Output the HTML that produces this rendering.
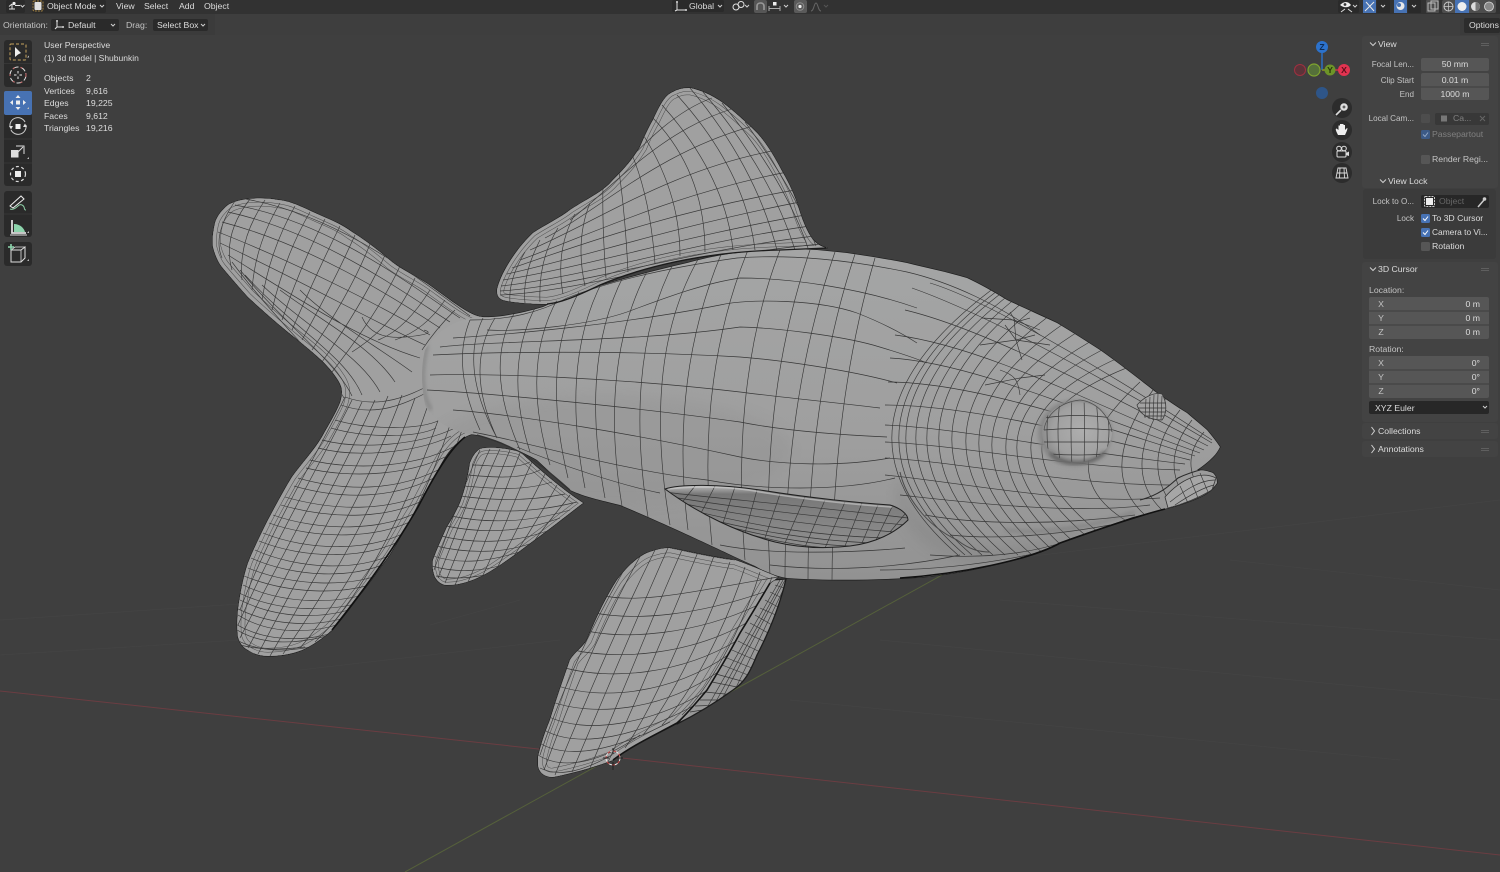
<!DOCTYPE html>
<html lang="en"><head><meta charset="utf-8"><title>Blender viewport</title>
<style>
html,body{margin:0;padding:0;background:#3f3f3f;overflow:hidden}
svg{display:block}
text{font-family:"Liberation Sans",sans-serif;font-size:8.7px;fill:#dcdcdc}
.r{text-anchor:end}.c{text-anchor:middle}
.d{fill:#8f8f8f}.l{fill:#c4c4c4}.dim{fill:#777}
.s{font-size:8.1px}
.w{fill:none;stroke:#363636;stroke-width:.65}
.o{stroke:#1d1d1d;stroke-width:1.3;stroke-linejoin:round}
.ic{fill:none;stroke:#e2e2e2;stroke-width:1}
.chev{fill:none;stroke:#d0d0d0;stroke-width:1}
.grip{fill:#5f5f5f}
</style></head><body>
<svg width="1500" height="872" viewBox="0 0 1500 872" xmlns="http://www.w3.org/2000/svg">
<defs>
<linearGradient id="bg" x1="0" y1="0" x2="0" y2="1"><stop offset="0" stop-color="#a4a5a5"/><stop offset=".55" stop-color="#9f9f9f"/><stop offset="1" stop-color="#929292"/></linearGradient>
<linearGradient id="pf" x1="0" y1="0" x2="0" y2="1"><stop offset="0" stop-color="#bcbcbc"/><stop offset=".14" stop-color="#777"/><stop offset=".6" stop-color="#858585"/><stop offset="1" stop-color="#8e8e8e"/></linearGradient>
<radialGradient id="eg" cx=".58" cy=".48" r=".6"><stop offset="0" stop-color="#aeaeae"/><stop offset=".72" stop-color="#a0a0a0"/><stop offset="1" stop-color="#8a8a8a"/></radialGradient>
<filter id="bl" x="-30%" y="-30%" width="160%" height="160%"><feGaussianBlur stdDeviation="6"/></filter>
<filter id="bl2" x="-30%" y="-30%" width="160%" height="160%"><feGaussianBlur stdDeviation="2"/></filter>
<clipPath id="cT"><path id="pT" d="M482,317 C470,316 450,300 432,287 C420,278 405,272 392,262 C378,250 365,240 352,232 C340,223 328,219 315,213 C300,206 290,201 278,200 C268,198 258,198 248,199 C240,200 233,202 228,205 C222,210 217,216 215,223 C213,232 212,240 213,247 C215,255 218,262 222,267 C232,279 240,288 248,297 C260,308 270,317 282,327 C295,338 306,346 318,357 C326,364 333,372 338,380 C341,385 342,388 342,392 C342,396 341,400 340,403 C335,415 328,426 322,437 C313,452 302,463 292,477 C284,490 276,505 268,520 C261,534 254,548 248,563 C243,578 240,595 238,610 C237,620 237,630 238,637 C240,644 244,648 248,650 C254,654 260,656 268,656 C280,656 292,654 302,650 C313,645 323,638 332,630 C341,620 350,608 358,597 C368,585 378,570 388,557 C398,542 408,522 418,507 C427,490 436,472 445,457 C451,448 458,441 465,437 C470,434 476,433 482,433 L520,380Z"/></clipPath>
<clipPath id="cB"><path id="pB" d="M425,350 C440,325 465,317 482,317 C495,318 520,314 543,307 C552,303 560,299 570,295 C586,290 603,285 620,280 C642,274 665,268 687,263 C705,258 720,255 737,253 C760,250 790,248 817,250 C827,251 838,252 847,253 C867,256 887,259 907,263 C927,268 947,272 967,278 C980,284 994,292 1007,300 C1024,308 1040,315 1057,323 C1072,332 1086,341 1100,350 C1120,364 1140,380 1157,393 C1167,400 1177,407 1187,413 C1194,419 1200,424 1207,430 C1212,436 1216,441 1220,447 C1218,451 1216,454 1213,457 C1208,462 1203,466 1197,470 C1203,470 1208,471 1213,473 C1216,476 1217,479 1217,483 C1213,489 1207,494 1200,497 C1187,503 1173,507 1160,510 C1151,512 1142,515 1133,517 C1110,525 1085,534 1060,543 C1040,552 1020,558 1000,563 C975,570 950,574 923,577 C880,580 830,581 787,578 C775,576 765,572 755,566 C730,555 680,530 620,505 C600,500 585,497 570,490 C558,480 548,470 537,460 C528,455 520,451 510,447 C498,441 488,438 477,435 C458,433 435,425 425,405 C421,385 421,365 425,350Z"/></clipPath>
<clipPath id="cD"><path id="pD" d="M497,290 C500,275 515,250 533,233 C545,225 560,218 570,210 C590,197 603,192 613,180 C625,168 632,160 640,147 C645,135 650,125 653,120 C660,105 665,95 673,92 C680,88 686,88 690,88 C700,90 712,95 723,103 C735,112 748,124 757,133 C768,145 776,160 783,173 C790,185 794,195 797,203 C802,220 807,232 813,240 C818,245 822,247 827,248 L780,250 C700,252 640,268 600,285 C575,297 560,303 547,304 C530,304 510,302 503,300 C498,298 497,295 497,290Z"/></clipPath>
<clipPath id="cA"><path id="pA" d="M480,449 C475,452 472,458 470,463 C468,477 465,490 460,503 C456,512 452,519 447,527 C442,538 437,549 433,560 C432,566 433,572 435,577 C438,582 442,585 447,585 C458,585 468,582 477,578 C491,572 504,562 517,553 C530,543 544,533 557,523 C566,516 575,509 583,503 C560,488 540,470 520,452 C510,449 490,446 480,449Z"/></clipPath>
<clipPath id="cP"><path id="pP" d="M538,757 C542,740 546,730 550,720 C556,700 563,680 570,660 C575,652 582,648 587,640 C596,618 606,597 617,580 C626,568 636,558 647,553 C655,550 662,548 670,548 C690,552 715,558 735,560 C750,565 765,572 778,577 C775,580 772,581 770,583 C760,600 750,617 740,633 C730,652 718,672 707,690 C697,702 687,714 677,723 C655,735 633,745 613,760 C595,767 573,773 553,777 C545,777 539,773 538,765Z"/></clipPath>
<clipPath id="cQ"><path id="pQ" d="M772,580 L786,579 C780,605 770,630 757,655 C750,672 745,682 733,690 C715,703 695,715 677,724 C695,705 720,665 740,633 C750,615 760,595 772,580Z"/></clipPath>
<clipPath id="cF"><path id="pF" d="M665,489 C680,484 720,484 760,490 C810,498 860,503 890,505 C900,508 908,514 908,520 C895,533 875,543 850,546 C825,549 800,548 775,542 C740,533 700,515 665,489Z"/></clipPath>
<clipPath id="cE"><ellipse id="pE" cx="1077" cy="432" rx="35" ry="30"/></clipPath>
<path id="w1" class="w" d="M470,316C420,280 340,215 245,199M460,318C410,285 330,222 235,205M450,322C400,290 320,232 228,212M440,328C390,295 310,245 222,222M430,335C380,305 290,260 218,232M425,345C370,320 300,280 220,243M420,358C360,340 300,300 228,255M412,372C375,345 330,320 300,290M395,382C370,345 320,320 280,290M380,392C360,355 310,330 262,285M362,395C345,355 295,330 245,275M352,396C335,360 285,325 240,270M344,398C322,360 275,320 232,262"/>
<path id="w2" class="w" d="M345,397C320,450 270,530 240,610M352,400C325,455 275,540 238,625M362,402C335,460 285,550 240,638M375,400C345,465 295,560 248,648M388,396C358,470 305,565 258,654M402,395C372,478 320,570 270,656M415,398C385,485 335,580 283,654M428,405C400,490 350,590 300,648M440,415C412,495 365,595 315,642M450,425C425,500 380,590 330,632M462,430C438,500 395,585 345,620M472,433C450,495 410,570 365,600"/>
<path id="w3" class="w" d="M345,397C380,410 410,395 430,385M335,420C370,430 420,430 440,420M322,440C360,450 420,445 455,428M310,460C350,470 420,470 465,440M298,478C340,490 400,495 452,462M285,497C330,510 395,515 440,485M273,515C315,530 385,535 430,505M263,533C305,550 375,555 418,525M255,550C295,568 360,575 405,548M248,568C290,585 350,590 392,570M243,585C285,605 340,605 378,590M240,600C280,620 330,620 364,604M238,615C270,635 315,635 350,620M237,630C262,645 295,645 330,635M240,645C260,650 280,650 305,647"/>
<path id="w4" class="w" d="M480,450C468,475 450,525 434,570M490,449C476,477 458,530 438,578M500,449C485,480 465,535 445,583M510,450C495,485 475,540 455,585M520,453C505,490 485,545 468,582M532,462C515,497 498,545 482,577M545,474C528,507 512,540 495,572M557,485C542,512 528,535 510,562M570,495C555,515 545,525 527,551"/>
<path id="w5" class="w" d="M472,465C490,465 515,470 530,462M468,475C490,477 520,480 540,470M464,486C488,488 522,492 552,482M460,496C488,500 525,502 565,494M455,506C485,512 525,515 577,502M451,516C480,522 520,525 570,510M446,526C475,532 515,535 560,518M441,536C470,543 510,545 550,530M436,546C465,553 505,555 540,540M433,556C460,565 490,562 525,550M432,566C455,573 485,572 512,562M436,576C455,580 475,578 498,572"/>
</defs>

<rect width="1500" height="872" fill="#3f3f3f"/>

<!-- faint floor grid -->
<g fill="none" stroke="#444" stroke-width=".7">
<path d="M0,620 L300,600M0,655 L240,640M1000,600 L1500,640M430,625 L520,600M1230,560 L1500,590M560,640 L300,670M880,640 L1500,700M790,700 L1400,760M1000,560 L1500,500"/>
</g>
<!-- axes -->
<path d="M0,691 L613,757 L1500,855" fill="none" stroke="#6b3d42" stroke-width="1"/>
<path d="M405,872 L613,757 L960,565" fill="none" stroke="#55603b" stroke-width="1"/>

<!-- merged outlines -->
<use href="#pT" fill="none" class="o"/>
<use href="#pA" fill="none" class="o"/>
<use href="#pB" fill="none" class="o"/>

<!-- tail -->
<use href="#pT" fill="#a0a0a0"/>
<g clip-path="url(#cT)">
<g fill="none"><use href="#pT" stroke="#4c4c4c" stroke-width="16"/><use href="#pT" stroke="#a0a0a0" stroke-width="15"/><use href="#pT" stroke="#4c4c4c" stroke-width="8"/><use href="#pT" stroke="#a0a0a0" stroke-width="7"/></g>
<use href="#w1"/>
<path class="w" d="M235,201Q212,235 222,258M250,199Q222,235 232,270M265,200Q238,240 242,280M280,203Q255,245 252,290M295,206Q270,250 262,300M310,212Q285,255 272,310M325,219Q302,262 282,320M340,226Q318,270 292,330M355,235Q335,280 302,340M370,244Q352,290 312,350M385,255Q365,300 322,362M400,266Q380,310 332,372M415,278Q395,325 352,352M430,290Q405,330 378,340M445,300Q425,330 395,340M455,310Q435,330 422,350M362,317Q372,340 405,337T424,330"/>
<use href="#w2"/>
<use href="#w3"/><use href="#w3" transform="translate(-4,8)"/>
</g>

<!-- anal fin -->
<use href="#pA" fill="#a0a0a0"/>
<g clip-path="url(#cA)">
<g fill="none"><use href="#pA" stroke="#4c4c4c" stroke-width="12"/><use href="#pA" stroke="#a0a0a0" stroke-width="11"/><use href="#pA" stroke="#4c4c4c" stroke-width="6"/><use href="#pA" stroke="#a0a0a0" stroke-width="5"/></g>
<use href="#w4"/>
<use href="#w5"/>
</g>

<!-- dorsal fin -->
<use href="#pD" fill="none" class="o"/>
<use href="#pD" fill="#a0a0a0"/>
<g clip-path="url(#cD)">
<g fill="none"><use href="#pD" stroke="#4c4c4c" stroke-width="14"/><use href="#pD" stroke="#a0a0a0" stroke-width="13"/><use href="#pD" stroke="#4c4c4c" stroke-width="7"/><use href="#pD" stroke="#a0a0a0" stroke-width="6"/></g>
<path class="w" d="M500,295C580,292 690,255 822,244M500,291C580,286 690,250 815,236M501,286C580,278 690,243 810,226M503,280C580,268 690,235 805,215M507,274C580,258 680,225 800,202M512,268C580,245 670,212 795,190M520,260C590,235 670,195 787,172M530,250C600,220 670,170 777,150M545,238C600,210 660,150 757,125M570,220C610,190 660,130 735,108M600,190C630,160 665,115 712,98"/>
<path class="w" d="M510,303Q508,280 525,252M525,303Q522,275 540,240M540,302Q538,260 558,228M563,294Q555,250 575,214M585,286Q575,240 590,203M606,278Q602,225 603,185M628,272Q625,210 618,165M655,264Q650,195 630,150M680,256Q680,190 640,130M705,252Q705,170 650,115M733,250Q725,175 662,105M755,250Q745,170 677,95M777,250Q755,165 690,88M795,250Q770,170 703,92M808,248Q785,180 722,103M816,246Q795,190 745,122"/>
</g>

<!-- body -->
<use href="#pB" fill="url(#bg)"/>
<g clip-path="url(#cB)">
<ellipse cx="610" cy="450" rx="180" ry="55" fill="#8f8f8f" opacity=".3" filter="url(#bl)"/>
<path d="M900,473C905,500 925,525 957,540C975,552 1040,548 1080,530L1070,560C1000,575 940,565 910,530C895,510 892,490 900,473Z" fill="#7c7c7c" opacity=".3" filter="url(#bl)"/>
<path class="w" d="M470,320Q451,366 480,430M483,318Q459,367 497,438M495,318Q464,368 497,438M515,312Q483,365 520,450M536,306Q503,367 530,452M558,298Q520,365 550,465M580,290Q540,362 568,478M603,280Q560,362 585,488M625,273Q579,360 605,498M650,266Q598,360 622,506M675,260Q623,358 648,517M700,256Q641,356 670,525M722,252Q669,378 688,530M748,250Q695,380 712,545M780,250Q730,380 745,560M810,250Q760,395 770,575M835,252Q785,395 785,578M855,254Q808,395 808,580M875,258Q833,400 832,580"/>
<path class="w" d="M470,320C510,320 540,312 567,298C600,285 650,270 737,258C790,254 850,260 907,272C950,282 1000,305 1040,335M487,330C520,332 590,325 627,312C660,300 700,284 740,278C790,278 860,288 917,308M453,338C500,335 620,325 720,305C750,298 820,300 857,313C880,322 900,332 917,343M440,347C500,340 640,342 740,327C780,328 840,336 873,345C890,350 910,356 927,363M433,355C490,352 620,350 740,357C780,360 850,370 897,383M430,375C490,373 620,378 740,392C770,396 830,402 880,408M427,390C470,392 620,405 740,422C770,428 820,434 887,437M453,410C520,415 640,435 740,457C780,465 840,467 890,458M473,432C540,445 620,470 707,480C760,490 840,492 895,478M517,447C560,465 620,485 660,493M720,545C770,555 850,553 905,548M770,565C830,572 900,568 960,555"/>
<path class="w" d="M998,285Q808,425 958,555M1005,285Q815,425 965,555M1012,285Q822,425 972,555M1022,285Q832,425 982,555M1033,285Q843,425 993,555M1045,285Q855,425 1005,555M1058,290Q868,425 1018,555M1072,300Q882,425 1032,555M1085,310Q895,425 1045,555M1098,320Q908,425 1058,555M1112,330Q922,425 1072,555M1123,340Q933,425 1083,550M1137,350Q947,425 1097,545M1148,360Q958,425 1108,540M1140,382Q1045,470 1125,520M1153,390Q1095,470 1145,515M1166,398Q1120,470 1162,510M1180,410Q1140,460 1172,505M1192,420Q1160,460 1185,498M1204,432Q1180,460 1200,490"/>
<path class="w" d="M930,283C980,298 1090,360 1212,440M912,288C980,312 1090,370 1212,443M905,310C980,328 1080,380 1208,446M895,335C975,345 1070,392 1204,450M890,358C965,362 1060,403 1200,453M888,382C960,382 1060,412 1195,456M885,405C960,405 1060,428 1190,460M885,425C960,428 1060,450 1185,464M885,442C960,445 1060,467 1180,470M885,458C960,462 1070,485 1170,485M885,475C960,482 1070,505 1160,498M900,495C965,502 1070,515 1150,505M925,515C980,525 1060,525 1135,515M950,535C1000,540 1055,535 1110,525M930,555C1000,560 1045,550 1085,535M880,570C950,570 1010,560 1060,548"/>
<path class="w" d="M1014,318L1016,340L1022,360M982,318L1014,320L1040,330M980,345L1016,340L1050,345M985,385L1020,378L1045,375M1000,370C1015,375 1018,380 1020,395M1010,312L1016,322L1030,318M1005,325L1016,340L1035,335"/>
<path d="M900,472C905,495 925,525 957,540C970,550 980,552 990,552" fill="none" stroke="#4a4a4a" stroke-width="1"/>
<path d="M1005,530C1050,535 1100,525 1135,512" fill="none" stroke="#777" stroke-width="2" filter="url(#bl2)"/>
<path d="M427,345C420,375 422,395 431,410" fill="none" stroke="#707070" stroke-width="2" filter="url(#bl2)"/>
<!-- lips -->
<path d="M1165,497C1180,480 1200,470 1216,478L1212,490C1195,500 1180,505 1168,508Z" fill="#a6a6a6" stroke="#333" stroke-width=".8"/>
<path class="w" d="M1170,502C1185,490 1200,480 1215,480M1175,505C1190,495 1205,487 1214,485M1180,486L1188,503M1190,478L1198,498M1200,473L1208,492"/>
<path d="M1140,500C1160,495 1170,485 1178,478C1190,472 1200,470 1208,468" fill="none" stroke="#2a2a2a" stroke-width="1.1"/>
</g>
<path d="M900,578C960,574 1030,560 1060,543C1085,534 1130,518 1165,509" fill="none" stroke="#111" stroke-width="1.6"/>
<path d="M547,304C560,303 575,297 600,285C640,268 700,252 780,250L826,248" fill="none" stroke="#1c1c1c" stroke-width="1.3"/>
<path d="M465,437C451,448 436,472 418,507C398,542 368,585 332,630" fill="none" stroke="#111" stroke-width="1.6"/>
<path d="M477,435C488,438 498,441 510,447C528,455 548,470 570,490" fill="none" stroke="#333" stroke-width="1.2"/>

<!-- eye -->
<ellipse cx="1075" cy="433" rx="37" ry="33" fill="#868686" filter="url(#bl2)"/>
<use href="#pE" fill="url(#eg)"/>
<g clip-path="url(#cE)">
<path class="w" d="M1050,400Q1044,432 1050,462M1060,400Q1056,432 1060,462M1072,398Q1070,432 1072,465M1084,398Q1085,432 1084,465M1096,400Q1100,432 1096,460M1106,408Q1112,432 1106,454M1044,418Q1077,413 1112,418M1044,430Q1077,427 1112,430M1044,442Q1077,442 1112,442M1050,454Q1077,456 1106,454"/>
</g>
<path d="M1044,430C1046,415 1060,402 1080,400C1098,402 1110,418 1112,432" fill="none" stroke="#4a4a4a" stroke-width=".7"/>
<path d="M1050,453C1060,465 1090,467 1105,452" fill="none" stroke="#3d3d3d" stroke-width="2" filter="url(#bl2)"/>
<!-- nostril -->
<path d="M1137,405C1145,396 1155,392 1162,394C1168,404 1166,415 1162,420C1150,420 1140,415 1137,405Z" fill="#a3a3a3" stroke="#3c3c3c" stroke-width=".8"/>
<path class="w" d="M1146,399L1145,418M1150,397L1149,419M1154,395L1153,420M1158,394L1157,420M1162,396L1161,420M1140,403H1166M1138,408H1166M1140,412H1166M1144,416H1164"/>

<!-- back pelvic piece -->
<use href="#pQ" fill="#989898"/>
<g clip-path="url(#cQ)"><path class="w" d="M775,585L790,590M770,592L786,600M765,600L780,608M760,608L778,616M755,615L772,625M750,623L770,634M745,632L765,642M738,641L760,652M732,650L755,660M727,658L752,668M722,665L748,675M716,674L745,682M712,682L742,688M705,692L735,695M700,700L730,700M695,706L722,705M690,712L715,708M780,580L700,720M785,580L715,712M788,580L730,700M783,580L708,716"/></g>
<use href="#pQ" fill="none" class="o"/>

<!-- pelvic fin -->
<use href="#pP" fill="none" class="o"/>
<use href="#pP" fill="#a0a0a0"/>
<g clip-path="url(#cP)">
<g fill="none"><use href="#pP" stroke="#4c4c4c" stroke-width="18"/><use href="#pP" stroke="#a0a0a0" stroke-width="17"/><use href="#pP" stroke="#4c4c4c" stroke-width="10"/><use href="#pP" stroke="#a0a0a0" stroke-width="9"/></g>
<path class="w" d="M630,560C600,610 565,680 540,755M642,553C610,610 575,685 544,770M655,550C625,610 590,690 555,775M668,548C640,610 605,695 572,772M682,550C655,610 620,700 590,768M698,552C672,615 635,705 608,762M714,556C690,620 655,705 625,748M730,562C708,625 672,700 643,735M745,567C725,630 690,695 662,725M760,572C742,630 708,690 682,715M772,577C755,625 725,680 700,702"/>
<path class="w" d="M600,595C640,605 700,590 778,577M590,612C635,622 700,615 770,590M582,630C625,640 695,635 758,605M573,650C620,660 690,655 748,622M565,668C610,680 680,675 738,640M558,686C600,700 670,695 728,655M552,702C592,716 660,712 718,672M547,716C585,735 650,725 708,690M544,730C580,750 640,735 695,705M541,744C575,762 625,745 670,722M538,755C565,772 605,760 640,735M540,768C560,778 585,770 612,755"/>
<path d="M670,548C690,552 715,558 735,560L720,556C700,552 685,550 670,548Z" fill="#777" stroke="#333" stroke-width=".6"/>
</g>
<path d="M770,583C760,600 750,617 740,633C730,652 718,672 707,690C697,702 687,714 677,723C655,735 633,745 613,760" fill="none" stroke="#151515" stroke-width="1.6"/>

<!-- pectoral fin -->
<use href="#pF" fill="url(#pf)"/>
<g clip-path="url(#cF)">
<path class="w" d="M665,492C700,497 800,505 908,518M672,497C720,505 800,515 905,525M680,503C730,513 800,525 895,532M690,510C740,522 800,535 885,538M705,518C750,530 810,540 870,543M725,526C770,537 815,545 850,546M745,533C780,543 815,548 835,548"/>
<path class="w" d="M695,486L680,505M715,486L700,515M735,487L722,526M757,490L745,533M780,494L765,538M805,497L785,543M825,500L805,547M845,502L825,548M862,503L845,546M878,505L862,543M892,507L876,540M905,514L890,532"/>
<path d="M668,489C690,486 730,486 760,492C810,500 860,505 892,507" fill="none" stroke="#cfcfcf" stroke-width="1.6" opacity=".6"/>
</g>
<use href="#pF" fill="none" stroke="#1f1f1f" stroke-width="1"/>

<!-- 3D cursor -->
<circle cx="613" cy="758" r="7" fill="none" stroke="#e8e8e8" stroke-width="1" stroke-dasharray="3 3"/>
<circle cx="613" cy="758" r="7" fill="none" stroke="#d04848" stroke-width="1" stroke-dasharray="3 3" stroke-dashoffset="3"/>
<path d="M613,748V754M613,762V770M603,758H609M617,758H623" stroke="#222" stroke-width="1"/>

<!-- top bar -->
<rect width="1500" height="14" fill="#323232"/>
<rect y="14" width="1500" height="21" fill="#3b3b3b"/>
<rect x="215" y="14" width="1245" height="21" fill="#3e3e3e"/>
<rect x="6" y="0" width="19" height="13" rx="2" fill="#2a2a2a"/>
<rect x="32" y="0" width="74" height="13" rx="2" fill="#2a2a2a"/>
<path class="ic" d="M9,9H15M12,4V9M15,5.5H20M9,6.5L12,4" stroke-width="1.2"/><circle cx="14" cy="3.5" r="1.6" fill="#eee"/>
<path class="chev" d="M20.5,5L22.5,7L24.5,5"/>
<rect x="34.5" y="2" width="7" height="8" fill="#e0e0e0" rx="1"/><rect x="33" y="1" width="10" height="10" rx="1" fill="none" stroke="#cfa24a" stroke-width=".7" stroke-dasharray="2 1"/>
<text x="47" y="9">Object Mode</text><path class="chev" d="M100,5L102,7L104,5"/>
<text x="116" y="9">View</text><text x="144" y="9">Select</text><text x="179" y="9">Add</text><text x="204" y="9">Object</text>

<text x="3" y="28" class="l">Orientation:</text>
<rect x="51" y="19" width="68" height="12" rx="2" fill="#2a2a2a"/>
<path class="ic" d="M57,22V27H62M57,27L55,29" stroke-width="1"/><circle cx="57" cy="21" r="1" fill="#ddd"/><circle cx="63" cy="27" r="1" fill="#ddd"/>
<text x="68" y="28">Default</text><path class="chev" d="M111,24L113,26L115,24"/>
<text x="126" y="28" class="l">Drag:</text>
<rect x="153" y="19" width="55" height="12" rx="2" fill="#2a2a2a"/>
<text x="157" y="28">Select Box</text><path class="chev" d="M201,24L203,26L205,24"/>

<!-- header center -->
<rect x="672" y="0" width="52" height="12" rx="2" fill="#2a2a2a"/>
<path class="ic" d="M677,2V10H686M677,10L675,11"/><circle cx="677" cy="2" r="1" fill="#ddd"/><circle cx="686" cy="10" r="1" fill="#ddd"/>
<text x="689" y="9">Global</text><path class="chev" d="M718,5L720,7L722,5"/>
<circle cx="736" cy="7" r="3" class="ic" fill="none"/><circle cx="741" cy="4.5" r="3" class="ic" fill="none"/><path class="chev" d="M745,5L747,7L749,5"/>
<rect x="754" y="0" width="13" height="13" rx="2" fill="#565656"/><path d="M757,10V6C757,2 764,2 764,6V10" fill="none" stroke="#999" stroke-width="1.6"/>
<path d="M769,6V11M780,6V11M769,8.5H780" stroke="#aaa" stroke-width="1" fill="none"/><rect x="773" y="2" width="3.5" height="3.5" fill="#eee"/><path class="chev" d="M784,5L786,7L788,5"/>
<rect x="794" y="0" width="13" height="13" rx="2" fill="#5a5a5a"/><circle cx="800" cy="6.5" r="3.8" fill="none" stroke="#8c8c8c"/><circle cx="800" cy="6.5" r="1.6" fill="#eee"/>
<path d="M811,11C814,11 814,3 816,3C818,3 818,11 821,11" fill="none" stroke="#666" stroke-width="1"/><path d="M824,5L826,7L828,5" fill="none" stroke="#555"/>

<!-- header right -->
<rect x="1338" y="0" width="21" height="13" rx="2" fill="#2a2a2a"/>
<path d="M1340,5C1344,1 1348,1 1351,5C1348,8 1344,8 1340,5Z" fill="#eee"/><circle cx="1345" cy="4.5" r="1.4" fill="#333"/><path d="M1341,12L1345,9M1348,9L1352,12" stroke="#ddd" fill="none"/>
<path class="chev" d="M1353,5L1355,7L1357,5"/>
<rect x="1363" y="0" width="13" height="13" fill="#4772b3"/><path d="M1365,11L1374,2M1366,2L1374,11" stroke="#e8e8e8" stroke-width="1"/><rect x="1377" y="0" width="13" height="13" rx="1" fill="#2a2a2a"/><path class="chev" d="M1381,5L1383,7L1385,5"/>
<rect x="1394" y="0" width="13" height="13" fill="#4772b3"/><circle cx="1400.5" cy="6" r="4" fill="#e8e8e8"/><circle cx="1399" cy="5" r="2" fill="#4772b3"/><rect x="1408" y="0" width="13" height="13" rx="1" fill="#2a2a2a"/><path class="chev" d="M1412,5L1414,7L1416,5"/>
<rect x="1426" y="0" width="13" height="13" rx="1" fill="#4d4d4d"/><rect x="1428" y="3" width="7" height="8" fill="none" stroke="#bbb"/><rect x="1431" y="1" width="7" height="8" fill="none" stroke="#bbb"/>
<rect x="1442" y="0" width="54" height="13" rx="2" fill="#4d4d4d"/><rect x="1455" y="0" width="14" height="13" fill="#4772b3"/>
<circle cx="1448.5" cy="6.5" r="4.5" fill="none" stroke="#ccc"/><path d="M1444,6.5H1453M1448.5,2V11" stroke="#ccc" stroke-width=".7"/>
<circle cx="1462" cy="6.5" r="4.5" fill="#eee"/>
<circle cx="1475.5" cy="6.5" r="4.5" fill="#ddd"/><path d="M1475.5,2A4.5,4.5 0 0 1 1475.5,11Z" fill="#777"/>
<circle cx="1489" cy="6.5" r="4.5" fill="#888" stroke="#ddd" stroke-width=".8"/>
<rect x="1464" y="18" width="36" height="15" rx="2" fill="#2c2c2c"/><text x="1469" y="28">Options</text>

<!-- toolbar -->
<rect x="4" y="40" width="28" height="47" rx="3" fill="#2a2a2a"/>
<rect x="4" y="92" width="28" height="94" rx="3" fill="#2a2a2a"/>
<rect x="4" y="91" width="28" height="24" rx="2" fill="#4772b3"/>
<rect x="4" y="191" width="28" height="46" rx="3" fill="#2a2a2a"/>
<rect x="4" y="242" width="28" height="24" rx="3" fill="#2a2a2a"/>
<path d="M4,63.5H32M4,139H32M4,163H32M4,214H32" stroke="#363636" stroke-width="1"/>
<rect x="10" y="44" width="16" height="16" rx="1" fill="none" stroke="#c7a45f" stroke-width="1" stroke-dasharray="3 2"/><path d="M15,47V57L18,54.5L21,53Z" fill="#eee"/>
<circle cx="18" cy="75" r="8" fill="none" stroke="#ddd" stroke-width="1" stroke-dasharray="6 2"/><circle cx="18" cy="75" r="8" fill="none" stroke="#c56464" stroke-width="1" stroke-dasharray="2 6"/><path d="M18,71V73.5M18,76.5V79M14,75H16.5M19.5,75H22" stroke="#eee"/>
<path d="M18,95L15.5,98H20.5ZM18,110L15.5,107H20.5ZM10,102.5L13,100V105ZM26,102.5L23,100V105Z" fill="#eee"/><rect x="16" y="100.5" width="4" height="4" fill="#eee"/>
<path d="M10,127A8,8 0 0 1 25,122M26,125A8,8 0 0 1 11,130" fill="none" stroke="#ccc" stroke-width="1"/><rect x="15.5" y="124" width="5" height="5" fill="#eee"/><path d="M9,126L13,126L11,129.5ZM27,127L23,127L25,123.5Z" fill="#ddd"/>
<rect x="11" y="150" width="7.5" height="7.5" fill="#ddd"/><path d="M16,146H24V154M18,152L23,147" fill="none" stroke="#ddd" stroke-width="1"/>
<circle cx="18" cy="174" r="7.5" fill="none" stroke="#ddd" stroke-dasharray="3 2.5" stroke-width="1.2"/><rect x="14.5" y="170.5" width="7" height="7" fill="#eee" stroke="#2a2a2a"/>
<path d="M10,206L21,196L24,199L13,208Z" fill="none" stroke="#eee"/><path d="M10,209C16,211 18,203 22,205C26,207 23,210 26,210" fill="none" stroke="#8dcfa6" stroke-width="1"/>
<path d="M12,220V233H26" fill="none" stroke="#ddd" stroke-width="1.8"/><path d="M14,232V224C20,224 24,228 25,232Z" fill="#8dd4ac"/><path d="M10,235H27" stroke="#ddd"/>
<path d="M11,250H21L25,247V258L21,262H11Z" fill="none" stroke="#ddd"/><path d="M11,250L15,247H25M21,250V262" fill="none" stroke="#ddd" stroke-width=".8"/><path d="M8,247H14M11,244V250" stroke="#8dd4ac" stroke-width="1.6"/>
<path d="M27,57.5L29,55.5V57.5ZM27,159L29,157V159ZM27,233L29,231V233ZM27,261L29,259V261ZM27,109L29,107V109Z" fill="#bbb"/>

<!-- overlay text -->
<text x="44" y="48">User Perspective</text>
<text x="44" y="61" style="font-size:8.5px">(1) 3d model | Shubunkin</text>
<text x="44" y="81">Objects</text><text x="86" y="81">2</text>
<text x="44" y="94">Vertices</text><text x="86" y="94">9,616</text>
<text x="44" y="106">Edges</text><text x="86" y="106">19,225</text>
<text x="44" y="119">Faces</text><text x="86" y="119">9,612</text>
<text x="44" y="131">Triangles</text><text x="86" y="131">19,216</text>

<!-- gizmo -->
<path d="M1322,70V53" stroke="#2c6ec0" stroke-width="1.5"/><path d="M1322,70H1338" stroke="#c93048" stroke-width="1.5"/><path d="M1322,70H1326" stroke="#7a9a20" stroke-width="1.5"/>
<circle cx="1322" cy="47" r="6" fill="#2c72cc"/><text x="1322" y="50" class="c" style="fill:#0d2c55;font-weight:bold">Z</text>
<circle cx="1322" cy="93" r="6" fill="#2e5588"/>
<circle cx="1300" cy="70" r="5.5" fill="#5c3339" stroke="#a03040"/>
<circle cx="1314" cy="70" r="6" fill="#55703a" stroke="#7fa42f" stroke-width="1.2"/>
<circle cx="1330" cy="70" r="5.5" fill="#6d9428"/><text x="1330" y="73" class="c" style="fill:#26350b;font-weight:bold">Y</text>
<circle cx="1344" cy="70" r="6" fill="#e13350"/><text x="1344" y="73" class="c" style="fill:#5a0f1c;font-weight:bold">X</text>
<circle cx="1342" cy="108" r="10" fill="#2c2c2c"/><circle cx="1344" cy="107" r="3.8" fill="#ddd"/><path d="M1341,110L1336,115" stroke="#ddd" stroke-width="1.6"/><path d="M1342.5,107H1345.5M1344,105.5V108.5" stroke="#333"/>
<circle cx="1342" cy="130" r="10" fill="#2c2c2c"/><path d="M1338,135C1336,131 1335,129 1336.5,128.5L1338.5,130V125.5H1340V124H1341.5V129V124H1343.5V129V125H1345V130L1347,128C1348,128 1347,131 1345,135Z" fill="#eee"/>
<circle cx="1342" cy="152" r="10" fill="#2c2c2c"/><rect x="1337" y="151" width="9" height="6" rx="1" fill="none" stroke="#ddd"/><circle cx="1339" cy="148.5" r="2.3" fill="none" stroke="#ddd"/><circle cx="1344" cy="148.5" r="2.3" fill="none" stroke="#ddd"/><path d="M1346,153L1349,151.5V156L1346,155Z" fill="#ddd"/>
<circle cx="1342" cy="173" r="10" fill="#2c2c2c"/><path d="M1338,168H1346L1348,178H1336ZM1337,173H1347M1340,168L1339.5,178M1344,168L1344.5,178" fill="none" stroke="#ddd" stroke-width=".9"/>

<!-- sidebar -->
<rect x="1362" y="36" width="136" height="152" rx="3" fill="#434343"/>
<rect x="1362" y="262" width="136" height="160" rx="3" fill="#434343"/>
<rect x="1363" y="189" width="133" height="70" rx="3" fill="#3b3b3b"/>
<rect x="1362" y="423" width="136" height="16" rx="3" fill="#434343"/>
<rect x="1362" y="441" width="136" height="16" rx="3" fill="#434343"/>

<path class="chev" d="M1370,42.5L1373,45.5L1376,42.5"/><text x="1378" y="47">View</text>
<text x="1414" y="67" class="r l s">Focal Len...</text><rect x="1421" y="58" width="68" height="13" rx="2" fill="#565656"/><text x="1455" y="67" class="c">50 mm</text>
<text x="1414" y="83" class="r l s">Clip Start</text><rect x="1421" y="73" width="68" height="27" rx="2" fill="#565656"/><path d="M1421,87H1489" stroke="#3e3e3e"/><text x="1455" y="83" class="c">0.01 m</text>
<text x="1414" y="97" class="r l s">End</text><text x="1455" y="97" class="c">1000 m</text>
<text x="1414" y="121" class="r l s">Local Cam...</text><rect x="1421" y="114" width="9" height="9" rx="1.5" fill="#4d4d4d"/>
<rect x="1435" y="113" width="54" height="12" rx="2" fill="#383838"/><rect x="1441" y="115.5" width="6" height="6" fill="#777"/><text x="1453" y="121" style="fill:#808080">Ca...</text><path d="M1480,116L1485,121M1485,116L1480,121" stroke="#666"/>
<rect x="1421" y="130" width="9" height="9" rx="1.5" fill="#3c5a86"/><path d="M1423,134.5L1425,136.5L1428,132.5" fill="none" stroke="#92a8c6"/>
<text x="1432" y="137" style="fill:#808080">Passepartout</text>
<rect x="1421" y="155" width="9" height="9" rx="1.5" fill="#565656"/><text x="1432" y="162" class="l">Render Regi...</text>

<path class="chev" d="M1380,179.5L1383,182.5L1386,179.5"/><text x="1388" y="184">View Lock</text>
<text x="1414" y="204" class="r l s">Lock to O...</text><rect x="1421" y="195" width="68" height="13" rx="2" fill="#272727"/><rect x="1426" y="198" width="7" height="7" fill="#eee"/><rect x="1424.5" y="196.5" width="10" height="10" rx="1" fill="none" stroke="#ccc" stroke-dasharray="2 1"/><text x="1439" y="204" style="fill:#666">Object</text><path d="M1478,207L1484,200" stroke="#ccc" stroke-width="1.5"/><circle cx="1484.5" cy="199" r="1.8" fill="#ccc"/>
<text x="1414" y="221" class="r l s">Lock</text>
<rect x="1421" y="214" width="9" height="9" rx="1.5" fill="#4772b3"/><path d="M1423,218.5L1425,220.5L1428,216.5" fill="none" stroke="#fff"/><text x="1432" y="221">To 3D Cursor</text>
<rect x="1421" y="228" width="9" height="9" rx="1.5" fill="#4772b3"/><path d="M1423,232.5L1425,234.5L1428,230.5" fill="none" stroke="#fff"/><text x="1432" y="235" style="font-size:8.4px">Camera to Vi...</text>
<rect x="1421" y="242" width="9" height="9" rx="1.5" fill="#565656"/><text x="1432" y="249">Rotation</text>

<path class="chev" d="M1370,267.5L1373,270.5L1376,267.5"/><text x="1378" y="272">3D Cursor</text>
<text x="1369" y="293" class="l">Location:</text>
<rect x="1369" y="297" width="120" height="42" rx="2" fill="#565656"/><path d="M1369,311H1489M1369,325H1489" stroke="#3e3e3e"/>
<text x="1381" y="307" class="c l">X</text><text x="1381" y="321" class="c l">Y</text><text x="1381" y="335" class="c l">Z</text>
<text x="1480" y="307" class="r">0 m</text><text x="1480" y="321" class="r">0 m</text><text x="1480" y="335" class="r">0 m</text>
<text x="1369" y="352" class="l">Rotation:</text>
<rect x="1369" y="356" width="120" height="42" rx="2" fill="#565656"/><path d="M1369,370H1489M1369,384H1489" stroke="#3e3e3e"/>
<text x="1381" y="366" class="c l">X</text><text x="1381" y="380" class="c l">Y</text><text x="1381" y="394" class="c l">Z</text>
<text x="1480" y="366" class="r">0°</text><text x="1480" y="380" class="r">0°</text><text x="1480" y="394" class="r">0°</text>
<rect x="1369" y="401" width="120" height="13" rx="2" fill="#272727"/><text x="1375" y="411">XYZ Euler</text><path class="chev" d="M1483,406L1485,408L1487,406"/>

<path class="chev" d="M1371.5,427L1374.5,431L1371.5,435"/><text x="1378" y="434">Collections</text>
<path class="chev" d="M1371.5,445L1374.5,449L1371.5,453"/><text x="1378" y="452">Annotations</text>
<g class="grip"><rect x="1481" y="43" width="8" height="1"/><rect x="1481" y="45" width="8" height="1"/><rect x="1481" y="268" width="8" height="1"/><rect x="1481" y="270" width="8" height="1"/><rect x="1481" y="430" width="8" height="1"/><rect x="1481" y="432" width="8" height="1"/><rect x="1481" y="448" width="8" height="1"/><rect x="1481" y="450" width="8" height="1"/></g>
</svg>
</body></html>
